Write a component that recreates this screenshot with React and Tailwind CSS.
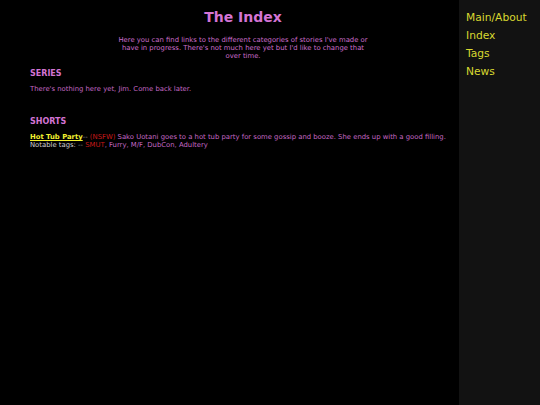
export default function App() {
  const f = { fontFamily: '"DejaVu Sans", Verdana, sans-serif' };
  return (
    <div className="flex w-[540px] h-[405px] bg-black overflow-hidden" style={f}>
      <main className="w-[459px] shrink-0 pl-[30px] pr-[3px]">
        <h1 className="text-[14px] leading-[16px] font-bold text-[#d474d4] text-center pt-[9px]">The Index</h1>
        <p className="text-[6.85px] leading-[8px] text-[#cc6ecc] text-center w-[252px] mx-auto mt-[11px]">
          Here you can find links to the different categories of stories I've made or have in progress. There's not much here yet but I'd like to change that over time.
        </p>
        <h2 className="text-[8px] leading-[10px] font-bold text-[#d474d4] mt-[9px]">SERIES</h2>
        <p className="text-[6.85px] leading-[8px] text-[#c468c4] mt-[6px]">There's nothing here yet, Jim. Come back later.</p>
        <h2 className="text-[8px] leading-[10px] font-bold text-[#d474d4] mt-[24px]">SHORTS</h2>
        <div className="text-[6.85px] leading-[8px] text-[#c468c4] mt-[6px]">
          <div>
            <span className="font-bold underline text-[#f2f230]">Hot Tub Party</span>
            <span className="text-[#888]">-- </span>
            <span className="text-[#c81818]">(NSFW)</span> Sako Uotani goes to a hot tub party for some gossip and booze. She ends up with a good filling.
          </div>
          <div>
            <span className="text-[#d0d0d0]">Notable tags: </span>
            <span className="text-[#888]">-- </span>
            <span className="text-[#c81818]">SMUT</span>, Furry, M/F, DubCon, Adultery
          </div>
        </div>
      </main>
      <nav className="flex-1 bg-[#121212] pl-[7px] pt-[9px] flex flex-col text-[10.7px] leading-[18px] text-[#d8d830]">
        <span>Main/About</span>
        <span>Index</span>
        <span>Tags</span>
        <span>News</span>
      </nav>
    </div>
  );
}
